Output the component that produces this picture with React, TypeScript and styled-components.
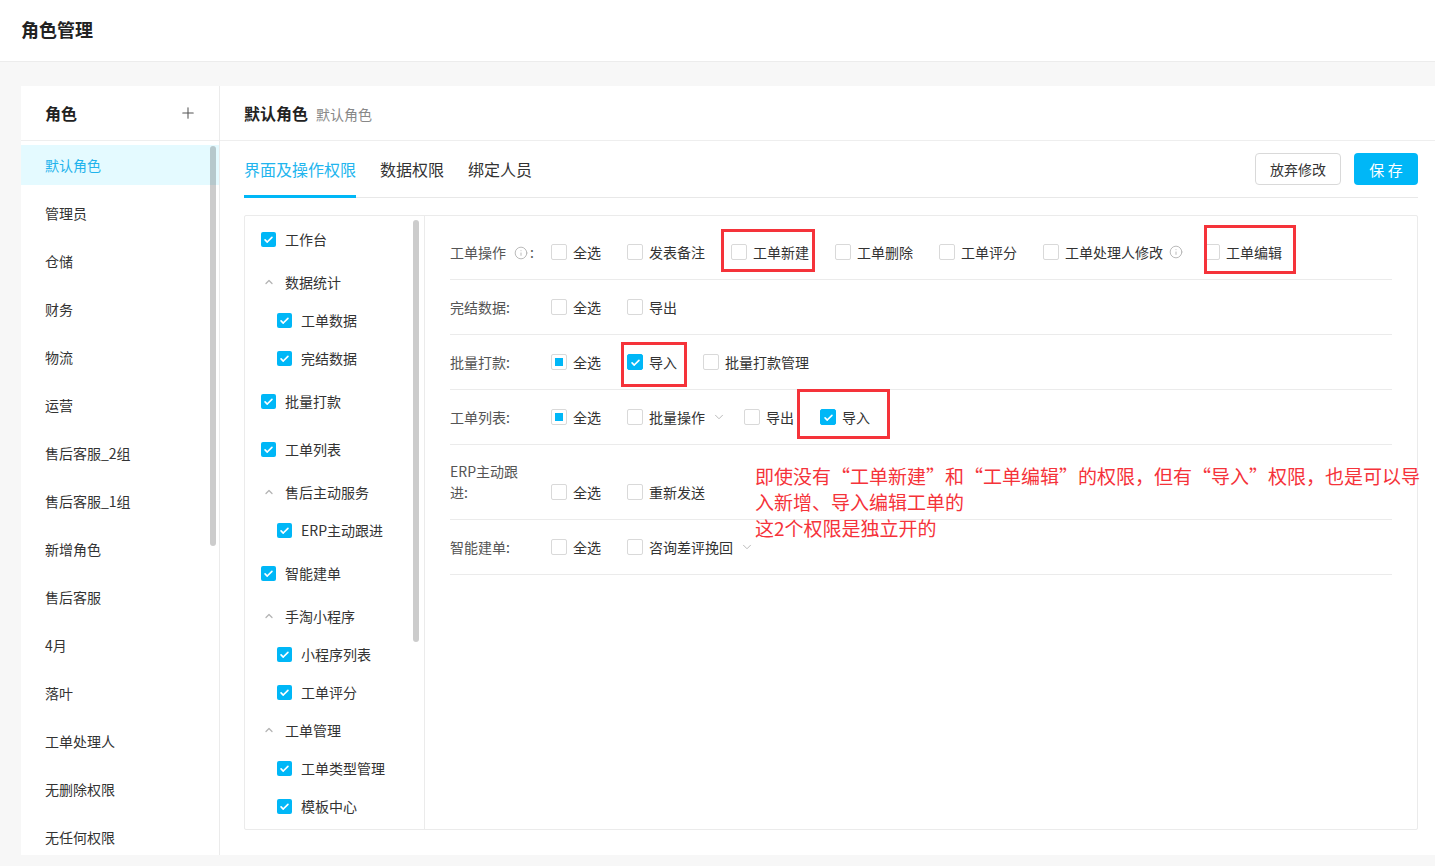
import React from 'react';
import styled, { createGlobalStyle } from 'styled-components';
import { Plus, ChevronUp, ChevronDown, Info } from 'lucide-react';

const PRIMARY = '#00b7f7';

const GlobalStyle = createGlobalStyle`
  html, body {
    margin: 0;
    padding: 0;
  }
  body {
    font-family: "Noto Sans CJK SC", "Noto Sans", sans-serif;
    color: #333;
    background: #f7f7f7;
  }
  * {
    box-sizing: border-box;
  }
`;

const Page = styled.div`
  position: relative;
  width: 1435px;
  height: 866px;
  overflow: hidden;
  background: #f7f7f7;
`;

const TopBar = styled.div`
  height: 62px;
  background: #fff;
  border-bottom: 1px solid #ececec;
  display: flex;
  align-items: center;
  padding: 0 0 4px 21px;
`;

const PageTitle = styled.h1`
  margin: 0;
  font-size: 18px;
  font-weight: 700;
  color: #222;
`;

const Body = styled.div`
  padding: 24px 0 0 21px;
`;

const Card = styled.div`
  display: flex;
  height: 769px;
  background: #fff;
`;

const LeftPanel = styled.div`
  width: 199px;
  border-right: 1px solid #ebebeb;
  display: flex;
  flex-direction: column;
`;

const PanelHeader = styled.div`
  height: 55px;
  flex-shrink: 0;
  border-bottom: 1px solid #eee;
  display: flex;
  align-items: center;
  justify-content: space-between;
  padding: 0 22px 0 24px;
  font-size: 16px;
  font-weight: 700;
  color: #222;
`;

const HeaderTitle = styled.div`
  display: flex;
  align-items: baseline;
`;

const HeaderSub = styled.span`
  margin-left: 8px;
  font-size: 14px;
  font-weight: 400;
  color: #888;
`;

const RoleList = styled.div`
  position: relative;
  flex: 1;
  overflow: hidden;
  padding-top: 4px;
`;

const RoleItem = styled.div<{ $active?: boolean }>`
  height: 40px;
  margin-bottom: 8px;
  padding-left: 24px;
  display: flex;
  align-items: center;
  font-size: 14px;
  color: ${(p) => (p.$active ? '#1fb3ec' : '#333')};
  background: ${(p) => (p.$active ? '#e4faff' : 'transparent')};
`;

const ScrollThumb = styled.div<{ $top: number; $height: number; $right: number }>`
  position: absolute;
  right: ${(p) => p.$right}px;
  top: ${(p) => p.$top}px;
  width: 6px;
  height: ${(p) => p.$height}px;
  border-radius: 3px;
  background: rgba(0, 0, 0, 0.2);
`;

const RightPanel = styled.div`
  flex: 1;
  display: flex;
  flex-direction: column;
`;

const RightBody = styled.div`
  flex: 1;
  display: flex;
  flex-direction: column;
  padding: 0 17px 25px 24px;
`;

const TabBar = styled.div`
  height: 57px;
  flex-shrink: 0;
  display: flex;
  align-items: flex-end;
  border-bottom: 1px solid #e8e8e8;
`;

const Tab = styled.div<{ $active?: boolean }>`
  font-size: 16px;
  line-height: 22px;
  padding-bottom: 15px;
  margin-right: 24px;
  margin-bottom: -1px;
  border-bottom: 3px solid ${(p) => (p.$active ? PRIMARY : 'transparent')};
  color: ${(p) => (p.$active ? '#22b5ee' : '#333')};
`;

const Actions = styled.div`
  margin-left: auto;
  align-self: center;
  display: flex;
  gap: 13px;
`;

const GhostButton = styled.button`
  height: 32px;
  padding: 0 14px;
  border: 1px solid #d9d9d9;
  border-radius: 4px;
  background: #fff;
  font-family: inherit;
  font-size: 14px;
  color: #333;
`;

const PrimaryButton = styled.button`
  width: 64px;
  height: 32px;
  border: none;
  border-radius: 4px;
  background: ${PRIMARY};
  font-family: inherit;
  font-size: 15px;
  color: #fff;
  white-space: pre;
`;

const ContentBox = styled.div`
  margin-top: 17px;
  flex: 1;
  display: flex;
  border: 1px solid #ebebeb;
  border-radius: 2px;
  overflow: hidden;
`;

const TreePanel = styled.div`
  position: relative;
  width: 180px;
  flex-shrink: 0;
  border-right: 1px solid #ebebeb;
  padding-top: 13px;
`;

const TreeRow = styled.div<{ $gap: number; $indent: number }>`
  height: 20px;
  margin-top: ${(p) => p.$gap}px;
  padding-left: ${(p) => p.$indent}px;
  display: flex;
  align-items: center;
  font-size: 14px;
  color: #333;
  white-space: nowrap;
`;

const TreeCheck = styled.span`
  width: 15px;
  height: 15px;
  border-radius: 2px;
  background: ${PRIMARY};
  display: inline-flex;
  align-items: center;
  justify-content: center;
  margin-right: 9px;
  flex-shrink: 0;
`;

const Caret = styled.span`
  width: 15px;
  margin-right: 9px;
  display: inline-flex;
  justify-content: center;
  color: #b5b5b5;
`;

const PermPanel = styled.div`
  flex: 1;
  padding: 9px 25px 0 25px;
`;

const PermRow = styled.div`
  display: flex;
  align-items: flex-end;
  padding: 16px 0;
  border-bottom: 1px solid #ebebeb;
`;

const PermLabel = styled.div<{ $wrap?: boolean }>`
  width: 101px;
  padding-right: 22px;
  flex-shrink: 0;
  font-size: 14px;
  line-height: 21px;
  color: #555;
  white-space: ${(p) => (p.$wrap ? 'normal' : 'nowrap')};
`;

const Options = styled.div`
  display: flex;
  align-items: center;
  white-space: nowrap;
`;

const Option = styled.label<{ $after: number }>`
  display: flex;
  align-items: center;
  height: 22px;
  margin-right: ${(p) => p.$after}px;
  font-size: 14px;
  color: #333;
`;

const Box = styled.span<{ $state: 'off' | 'on' | 'half' }>`
  width: 16px;
  height: 16px;
  margin-right: 6px;
  border-radius: 2px;
  flex-shrink: 0;
  display: inline-flex;
  align-items: center;
  justify-content: center;
  border: 1px solid ${(p) => (p.$state === 'on' ? PRIMARY : '#d9d9d9')};
  background: ${(p) => (p.$state === 'on' ? PRIMARY : '#fff')};
`;

const HalfMark = styled.span`
  width: 8px;
  height: 8px;
  background: ${PRIMARY};
`;

const Suffix = styled.span<{ $gap: number }>`
  display: inline-flex;
  vertical-align: -2px;
  margin: 0 2px 0 ${(p) => p.$gap}px;
  color: #b0b0b0;
`;

const RedBox = styled.div<{ $x: number; $y: number; $w: number; $h: number }>`
  position: absolute;
  left: ${(p) => p.$x}px;
  top: ${(p) => p.$y}px;
  width: ${(p) => p.$w}px;
  height: ${(p) => p.$h}px;
  border: 3px solid #f5333a;
  pointer-events: none;
`;

const Note = styled.div`
  position: absolute;
  left: 755px;
  top: 463px;
  font-size: 19px;
  line-height: 26px;
  color: #f5333a;
  white-space: nowrap;
`;

const Tick = () => (
  <svg width="11" height="11" viewBox="0 0 16 16">
    <path d="M3 8.5l3.2 3.2L13 4.8" fill="none" stroke="#fff" strokeWidth="2.4" strokeLinecap="round" strokeLinejoin="round" />
  </svg>
);

const roles = [
  '默认角色', '管理员', '仓储', '财务', '物流', '运营', '售后客服_2组', '售后客服_1组',
  '新增角色', '售后客服', '4月', '落叶', '工单处理人', '无删除权限', '无任何权限',
];

type TreeNode = { name: string; kind: 'top' | 'group' | 'child'; gap: number };

const tree: TreeNode[] = [
  { name: '工作台', kind: 'top', gap: 0 },
  { name: '数据统计', kind: 'group', gap: 23 },
  { name: '工单数据', kind: 'child', gap: 18 },
  { name: '完结数据', kind: 'child', gap: 18 },
  { name: '批量打款', kind: 'top', gap: 23 },
  { name: '工单列表', kind: 'top', gap: 28 },
  { name: '售后主动服务', kind: 'group', gap: 23 },
  { name: 'ERP主动跟进', kind: 'child', gap: 18 },
  { name: '智能建单', kind: 'top', gap: 23 },
  { name: '手淘小程序', kind: 'group', gap: 23 },
  { name: '小程序列表', kind: 'child', gap: 18 },
  { name: '工单评分', kind: 'child', gap: 18 },
  { name: '工单管理', kind: 'group', gap: 18 },
  { name: '工单类型管理', kind: 'child', gap: 18 },
  { name: '模板中心', kind: 'child', gap: 18 },
];

type Opt = { text: string; state?: 'off' | 'on' | 'half'; suffix?: 'down' | 'info' };
type Perm = { label: string; info?: boolean; wrap?: boolean; options: Opt[] };

const perms: Perm[] = [
  {
    label: '工单操作',
    info: true,
    options: [
      { text: '全选' }, { text: '发表备注' }, { text: '工单新建' }, { text: '工单删除' },
      { text: '工单评分' }, { text: '工单处理人修改', suffix: 'info' }, { text: '工单编辑' },
    ],
  },
  { label: '完结数据', options: [{ text: '全选' }, { text: '导出' }] },
  {
    label: '批量打款',
    options: [{ text: '全选', state: 'half' }, { text: '导入', state: 'on' }, { text: '批量打款管理' }],
  },
  {
    label: '工单列表',
    options: [
      { text: '全选', state: 'half' }, { text: '批量操作', suffix: 'down' },
      { text: '导出' }, { text: '导入', state: 'on' },
    ],
  },
  { label: 'ERP主动跟进', wrap: true, options: [{ text: '全选' }, { text: '重新发送' }] },
  { label: '智能建单', options: [{ text: '全选' }, { text: '咨询差评挽回', suffix: 'down' }] },
];

const CheckOption: React.FC<{ opt: Opt }> = ({ opt }) => {
  const state = opt.state || 'off';
  return (
    <Option $after={opt.suffix === 'down' ? 16 : opt.suffix ? 19 : 26}>
      <Box $state={state}>
        {state === 'on' && <Tick />}
        {state === 'half' && <HalfMark />}
      </Box>
      {opt.text}
      {opt.suffix === 'down' && (
        <Suffix $gap={7}>
          <ChevronDown size={14} strokeWidth={1.5} />
        </Suffix>
      )}
      {opt.suffix === 'info' && (
        <Suffix $gap={6}>
          <Info size={14} strokeWidth={1.5} />
        </Suffix>
      )}
    </Option>
  );
};

const App: React.FC = () => {
  return (
    <Page>
      <GlobalStyle />
      <TopBar>
        <PageTitle>角色管理</PageTitle>
      </TopBar>
      <Body>
        <Card>
          <LeftPanel>
            <PanelHeader>
              <span>角色</span>
              <Plus size={18} strokeWidth={1.4} color="#555" />
            </PanelHeader>
            <RoleList>
              {roles.map((r, i) => (
                <RoleItem key={r} $active={i === 0}>
                  {r}
                </RoleItem>
              ))}
              <ScrollThumb $top={5} $height={400} $right={3} />
            </RoleList>
          </LeftPanel>
          <RightPanel>
            <PanelHeader>
              <HeaderTitle>
                默认角色
                <HeaderSub>默认角色</HeaderSub>
              </HeaderTitle>
            </PanelHeader>
            <RightBody>
              <TabBar>
                <Tab $active>界面及操作权限</Tab>
                <Tab>数据权限</Tab>
                <Tab>绑定人员</Tab>
                <Actions>
                  <GhostButton>放弃修改</GhostButton>
                  <PrimaryButton>{'保 存'}</PrimaryButton>
                </Actions>
              </TabBar>
              <ContentBox>
                <TreePanel>
                  {tree.map((n) => (
                    <TreeRow key={n.name} $gap={n.gap} $indent={n.kind === 'child' ? 32 : 16}>
                      {n.kind === 'group' ? (
                        <Caret>
                          <ChevronUp size={12} strokeWidth={2.6} />
                        </Caret>
                      ) : (
                        <TreeCheck>
                          <Tick />
                        </TreeCheck>
                      )}
                      {n.name}
                    </TreeRow>
                  ))}
                  <ScrollThumb $top={4} $height={422} $right={5} />
                </TreePanel>
                <PermPanel>
                  {perms.map((p) => (
                    <PermRow key={p.label}>
                      <PermLabel $wrap={p.wrap}>
                        {p.label}
                        {p.info && (
                          <Suffix $gap={8}>
                            <Info size={14} strokeWidth={1.5} />
                          </Suffix>
                        )}
                        :
                      </PermLabel>
                      <Options>
                        {p.options.map((o) => (
                          <CheckOption key={o.text} opt={o} />
                        ))}
                      </Options>
                    </PermRow>
                  ))}
                </PermPanel>
              </ContentBox>
            </RightBody>
          </RightPanel>
        </Card>
      </Body>

      <RedBox $x={721} $y={229} $w={94} $h={43} />
      <RedBox $x={1204} $y={225} $w={92} $h={49} />
      <RedBox $x={621} $y={342} $w={66} $h={45} />
      <RedBox $x={797} $y={389} $w={93} $h={50} />
      <Note>
        <div>即使没有“工单新建”和“工单编辑”的权限，但有“导入”权限，也是可以导</div>
        <div>入新增、导入编辑工单的</div>
        <div>这2个权限是独立开的</div>
      </Note>
    </Page>
  );
};

export default App;
